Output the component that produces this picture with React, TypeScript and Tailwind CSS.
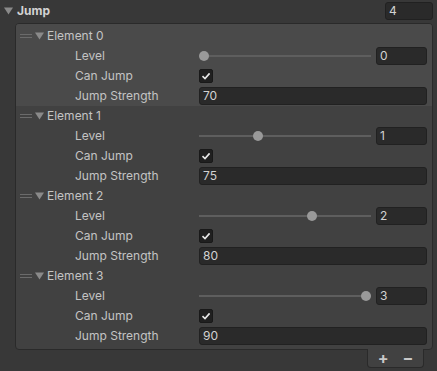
import React from 'react';

interface JumpElement {
  level: number;
  canJump: boolean;
  strength: number;
}

const elements: JumpElement[] = [
  { level: 0, canJump: true, strength: 70 },
  { level: 1, canJump: true, strength: 75 },
  { level: 2, canJump: true, strength: 80 },
  { level: 3, canJump: true, strength: 90 },
];

const MAX_LEVEL = 3;

function Foldout() {
  return (
    <svg width="9" height="8" viewBox="0 0 9 8" className="shrink-0">
      <path d="M0 0.5 H9 L4.5 7.5 Z" fill="#8a8a8a" />
    </svg>
  );
}

function Handle() {
  return (
    <div className="flex flex-col gap-[2px] w-[12px] shrink-0">
      <div className="h-[1px] bg-[#6b6b6b]" />
      <div className="h-[1px] bg-[#6b6b6b]" />
    </div>
  );
}

function Field({ value, className = '' }: { value: string | number; className?: string }) {
  return (
    <div
      className={`h-[18px] bg-[#2a2a2a] border border-[#212121] rounded-[3px] pl-[3px] flex items-center text-[#d2d2d2] ${className}`}
    >
      {value}
    </div>
  );
}

function Slider({ value }: { value: number }) {
  const pct = value / MAX_LEVEL;
  return (
    <div className="flex items-center gap-[5px] flex-1">
      <div className="relative flex-1 h-[10px]">
        <div className="absolute left-0 right-0 top-[4px] h-[2px] bg-[#5e5e5e]" />
        <div
          className="absolute top-0 w-[10px] h-[10px] rounded-full bg-[#999999]"
          style={{ left: `calc(${pct} * (100% - 10px))` }}
        />
      </div>
      <Field value={value} className="w-[51px]" />
    </div>
  );
}

function Checkbox({ checked }: { checked: boolean }) {
  return (
    <div className="w-[14px] h-[14px] rounded-[2px] bg-[#202020] border border-[#191919] flex items-center justify-center">
      {checked && (
        <svg width="10" height="10" viewBox="0 0 10 10">
          <path d="M1.5 5.2 L4 7.6 L8.6 2.4" fill="none" stroke="#e8e8e8" strokeWidth="1.6" />
        </svg>
      )}
    </div>
  );
}

function Row({ label, children }: { label: string; children: React.ReactNode }) {
  return (
    <div className="h-[20px] flex items-center">
      <div className="w-[183px] pl-[59px] shrink-0">{label}</div>
      <div className="flex-1 flex items-center pr-[5px]">{children}</div>
    </div>
  );
}

function ElementBlock({ item, index }: { item: JumpElement; index: number }) {
  return (
    <div className={index === 0 ? 'bg-[#4a4a4a] pt-[2px]' : ''}>
      <div className="h-[20px] flex items-center pl-[4px]">
        <Handle />
        <div className="ml-[3px]">
          <Foldout />
        </div>
        <span className="ml-[3px]">Element {index}</span>
      </div>
      <Row label="Level">
        <Slider value={item.level} />
      </Row>
      <Row label="Can Jump">
        <Checkbox checked={item.canJump} />
      </Row>
      <Row label="Jump Strength">
        <Field value={item.strength} className="flex-1" />
      </Row>
    </div>
  );
}

export default function App() {
  return (
    <div
      className="w-[437px] h-[371px] bg-[#383838] text-[12px] text-[#c4c4c4] overflow-hidden"
      style={{ fontFamily: 'Inter, "Noto Sans", sans-serif' }}
    >
      {/* Header */}
      <div className="h-[21px] flex items-center pl-[4px] pr-[4px]">
        <Foldout />
        <span className="ml-[4px] font-bold text-[#d2d2d2]">Jump</span>
        <Field value={4} className="ml-auto w-[48px]" />
      </div>

      {/* List */}
      <div className="ml-[15px] mr-[4px] mt-[2px] bg-[#414141] border border-[#2a2a2a] rounded-[4px] pb-[3px] overflow-hidden">
        {elements.map((item, i) => (
          <ElementBlock key={i} item={item} index={i} />
        ))}
      </div>

      {/* Footer */}
      <div className="ml-auto mr-[13px] w-[57px] h-[19px] -mt-[1px] bg-[#414141] border border-t-0 border-[#2a2a2a] rounded-b-[4px] flex items-center justify-center gap-[14px] text-[#c8c8c8]">
        <span className="text-[16px] font-bold leading-none">+</span>
        <span className="text-[16px] font-bold leading-none">−</span>
      </div>
    </div>
  );
}
